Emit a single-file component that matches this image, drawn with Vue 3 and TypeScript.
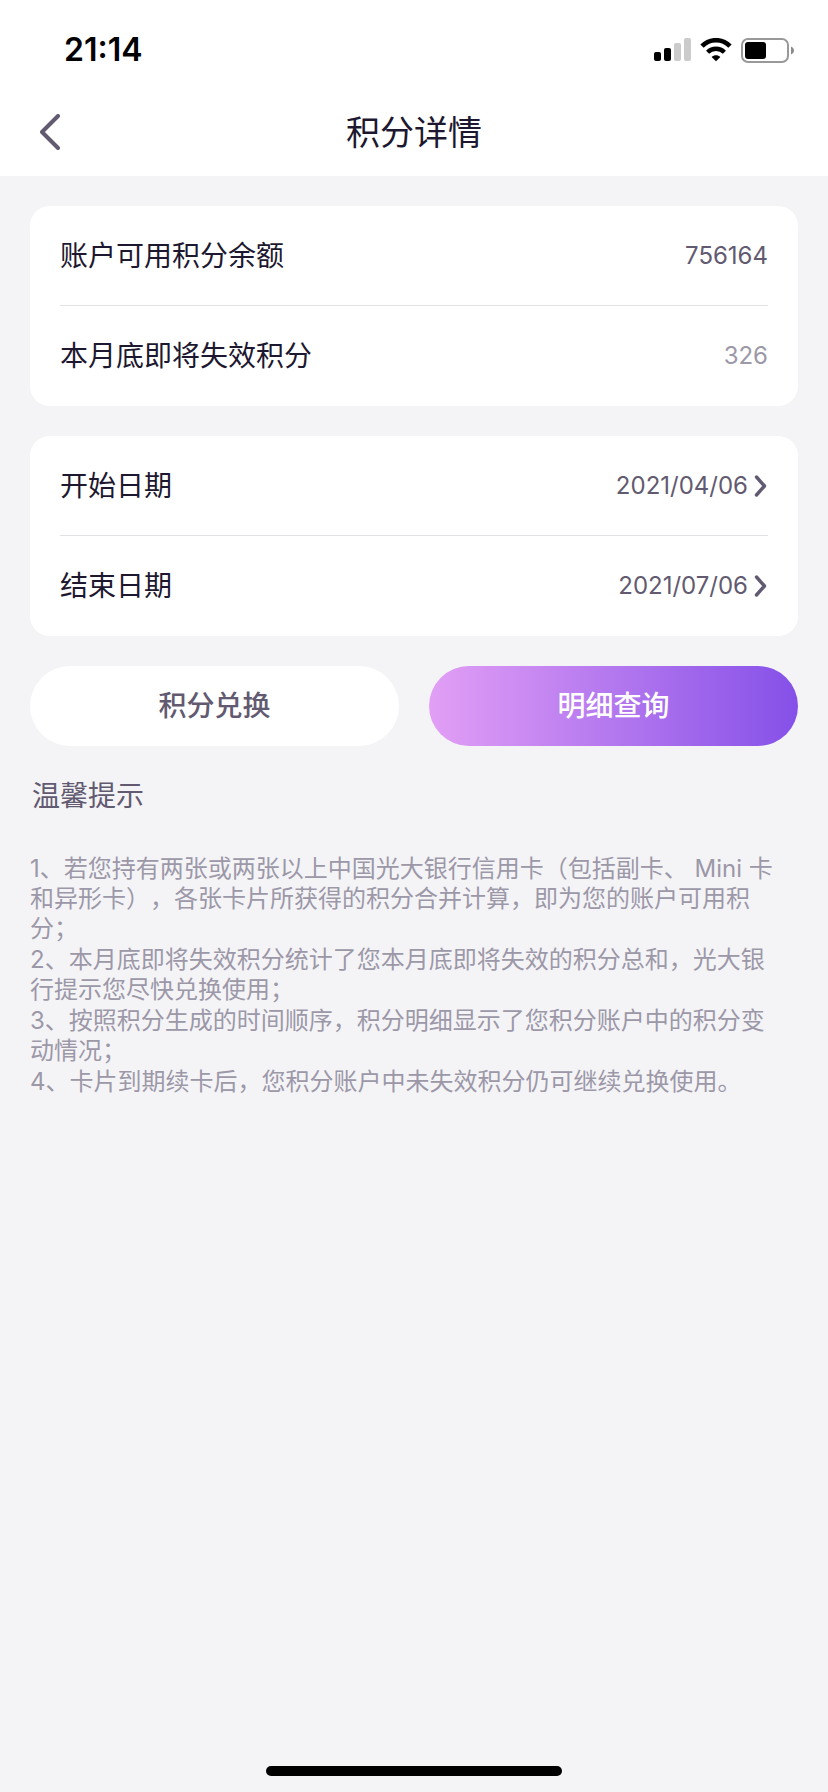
<script setup lang="ts">
interface InfoRow {
  label: string
  value: string
  muted?: boolean
}

interface DateRow {
  id: string
  label: string
  value: string
}

const balances: InfoRow[] = [
  { label: '账户可用积分余额', value: '756164' },
  { label: '本月底即将失效积分', value: '326', muted: true },
]

const dates: DateRow[] = [
  { id: 'start-date', label: '开始日期', value: '2021/04/06' },
  { id: 'end-date', label: '结束日期', value: '2021/07/06' },
]

const tips: string[] = [
  '1、若您持有两张或两张以上中国光大银行信用卡（包括副卡、 Mini 卡\n和异形卡），各张卡片所获得的积分合并计算，即为您的账户可用积\n分；',
  '2、本月底即将失效积分统计了您本月底即将失效的积分总和，光大银\n行提示您尽快兑换使用；',
  '3、按照积分生成的时间顺序，积分明细显示了您积分账户中的积分变\n动情况；',
  '4、卡片到期续卡后，您积分账户中未失效积分仍可继续兑换使用。',
]
</script>

<template>
  <div class="page">
    <div class="status-bar">
      <span class="time">21:14</span>
      <div class="status-icons">
        <svg width="37" height="24" viewBox="0 0 37 24" aria-hidden="true">
          <rect x="0" y="14" width="7" height="9" rx="2" fill="#000" />
          <rect x="10" y="10" width="7" height="13" rx="2" fill="#000" />
          <rect x="20" y="5" width="7" height="18" rx="2" fill="#cbcbcb" />
          <rect x="30" y="0" width="7" height="23" rx="2" fill="#cbcbcb" />
        </svg>
        <svg width="32" height="24" viewBox="0 0 32 24" aria-hidden="true">
          <path d="M2 8.2C9.8 .2 22.2 .2 30 8.2" fill="none" stroke="#000" stroke-width="4.6" />
          <path d="M7.6 14.2C12.3 9.6 19.7 9.6 24.4 14.2" fill="none" stroke="#000" stroke-width="4.4" />
          <path d="M11.6 18.9C14.1 16.7 17.9 16.7 20.4 18.9L16 23.2Z" fill="#000" />
        </svg>
        <svg class="battery" width="53" height="25" viewBox="0 0 53 25" aria-hidden="true">
          <rect x="1" y="1" width="46" height="23" rx="6" fill="none" stroke="#999" stroke-width="2" />
          <rect x="4" y="4" width="21" height="17" rx="3" fill="#000" />
          <path d="M50 8.5C54 10 54 15 50 16.5Z" fill="#8c8c8c" />
        </svg>
      </div>
    </div>

    <header class="nav">
      <button class="back" type="button" aria-label="返回">
        <svg width="20" height="36" viewBox="0 0 20 36" aria-hidden="true">
          <path d="M18 2L2 18L18 34" fill="none" stroke="#625a70" stroke-width="4" stroke-linecap="round" stroke-linejoin="round" />
        </svg>
      </button>
      <h1 class="title">积分详情</h1>
    </header>

    <main class="content">
      <dl class="card">
        <div v-for="row in balances" :key="row.label" class="row">
          <dt class="label">{{ row.label }}</dt>
          <dd class="value" :class="{ muted: row.muted }">{{ row.value }}</dd>
        </div>
      </dl>

      <div class="card">
        <div v-for="row in dates" :key="row.id" class="row">
          <label class="label" :for="row.id">{{ row.label }}</label>
          <button :id="row.id" class="value picker" type="button">
            {{ row.value }}
            <svg width="14" height="24" viewBox="0 0 14 24" aria-hidden="true">
              <path d="M2.5 3L10.5 12L2.5 21" fill="none" stroke="#625a70" stroke-width="3.4" stroke-linecap="round" stroke-linejoin="round" />
            </svg>
          </button>
        </div>
      </div>

      <div class="actions">
        <button class="action" type="button">积分兑换</button>
        <button class="action primary" type="button">明细查询</button>
      </div>

      <section class="tips">
        <h2 class="tips-title">温馨提示</h2>
        <p v-for="tip in tips" :key="tip" class="tip">{{ tip }}</p>
      </section>
    </main>

    <div class="home-indicator"></div>
  </div>
</template>

<style>
body {
  margin: 0;
  background: #f4f4f7;
}
</style>

<style scoped>
.page {
  display: flex;
  flex-direction: column;
  box-sizing: border-box;
  min-height: 100vh;
  padding-bottom: 16px;
  background: #f4f4f7;
  color: #1d1830;
  font-family: Inter, 'Noto Sans CJK SC', sans-serif;
  text-spacing-trim: space-all;
}

button {
  margin: 0;
  padding: 0;
  border: 0;
  background: none;
  font-family: inherit;
  cursor: pointer;
}

.status-bar {
  display: flex;
  align-items: center;
  justify-content: space-between;
  height: 88px;
  padding: 0 34px 0 64px;
  background: #fff;
}

.time {
  padding-top: 12px;
  color: #000;
  font-size: 32px;
  font-weight: 600;
  line-height: 40px;
}

.status-icons {
  display: flex;
  align-items: center;
  gap: 9px;
  padding-top: 12px;
}

.nav {
  display: grid;
  grid-template-columns: 80px 1fr 80px;
  align-items: center;
  height: 88px;
  background: #fff;
}

.back {
  display: flex;
  align-items: center;
  height: 88px;
  padding-left: 40px;
}

.title {
  margin: 0;
  padding-top: 2px;
  font-size: 34px;
  font-weight: 400;
  line-height: 48px;
  text-align: center;
}

.content {
  padding: 30px 30px 0;
}

.card {
  margin: 0 0 30px;
  padding: 0 30px;
  border-radius: 20px;
  background: #fff;
}

.row {
  display: flex;
  align-items: center;
  justify-content: space-between;
  box-sizing: border-box;
  height: 100px;
}

.row:not(:last-child) {
  border-bottom: 1px solid #e2e2e6;
}

.label {
  font-size: 28px;
  line-height: 40px;
}

.value {
  margin: 0;
  color: #625a70;
  font-size: 24px;
  line-height: 40px;
}

.value.muted {
  color: #9c98a8;
}

.picker {
  display: flex;
  align-items: center;
  gap: 6px;
}

.actions {
  display: grid;
  grid-template-columns: 1fr 1fr;
  gap: 30px;
}

.action {
  height: 80px;
  border-radius: 40px;
  background: #fff;
  color: #625a70;
  font-size: 28px;
  font-weight: 500;
  line-height: 40px;
}

.primary {
  background: linear-gradient(90deg, #e29ff5, #8550e8);
  color: #fff;
}

.tips {
  padding-top: 30px;
}

.tips-title {
  margin: 0 0 38px;
  padding-left: 2px;
  color: #625a70;
  font-size: 28px;
  font-weight: 400;
  line-height: 40px;
}

.tip {
  margin: 0 0 1px;
  color: #9c98a8;
  font-size: 24px;
  line-height: 30px;
  white-space: pre-line;
}

.home-indicator {
  width: 296px;
  height: 10px;
  margin: auto auto 0;
  border-radius: 5px;
  background: #000;
}
</style>
